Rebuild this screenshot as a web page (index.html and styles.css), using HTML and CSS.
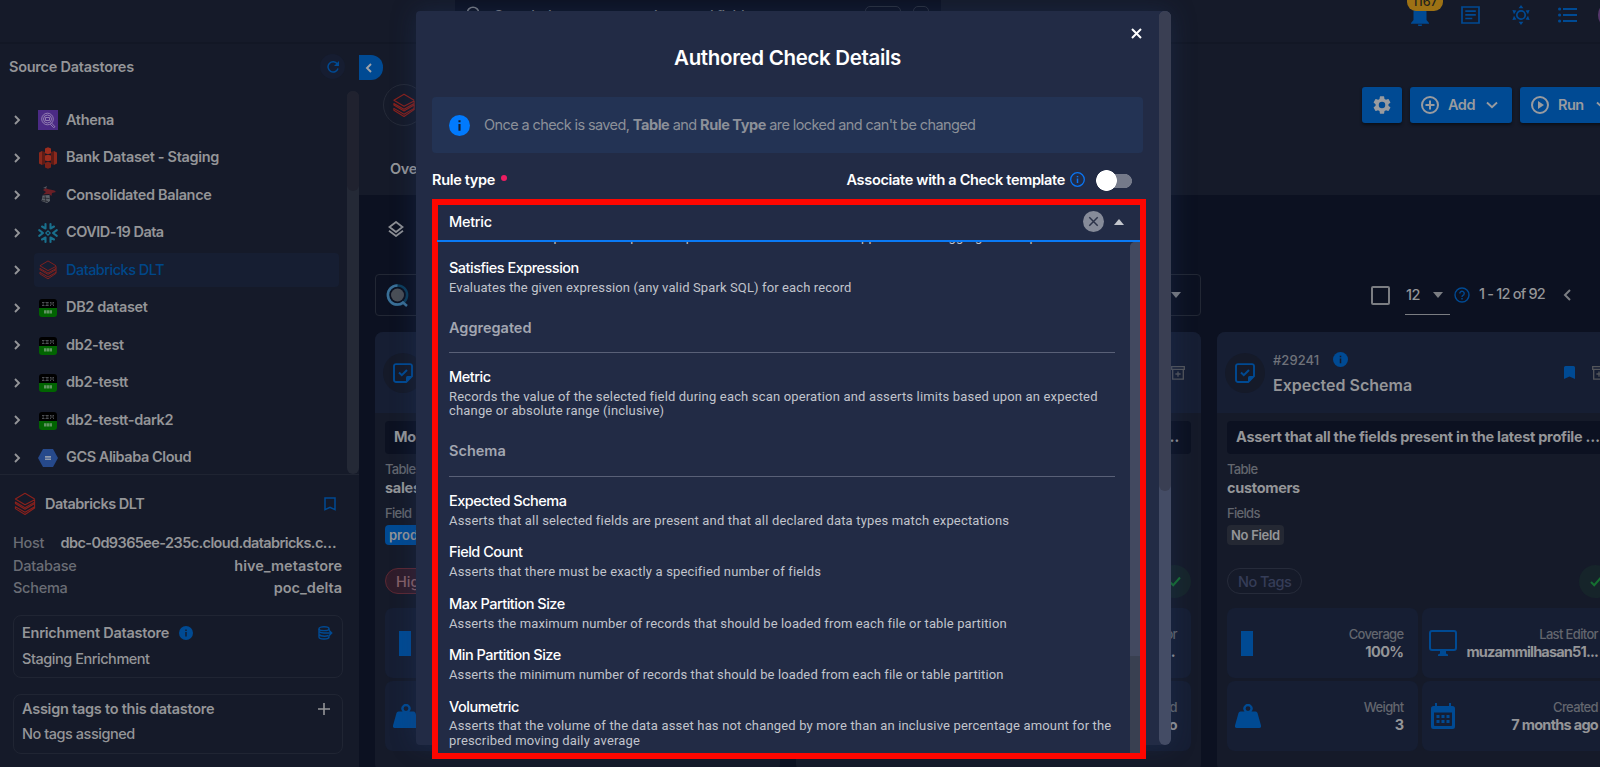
FILE: index.html
```
<!DOCTYPE html>
<html lang="en">
<head>
<meta charset="utf-8">
<title>Authored Check Details</title>
<link rel="stylesheet" href="styles.css">
</head>
<body>
<svg class="defs" width="0" height="0">
  <symbol id="chev" viewBox="0 0 8 10"><path d="M2 1l4 4-4 4" fill="none" stroke="currentColor" stroke-width="1.9"/></symbol>
  <symbol id="brick" viewBox="0 0 24 26"><g fill="none" stroke="currentColor" stroke-width="1.150" stroke-linejoin="round"><path d="M22.500 7.500L12 1.200 1.500 7.500 12 13.800l10.500-5.500v4.200L12 18.700 1.500 12.500v-1.600L12 17l10.500-6"/><path d="M22.500 12.500v4.800L12 24.500 1.500 18v-2L12 22l10.500-6"/></g></symbol>
  <symbol id="db2" viewBox="0 0 18 18"><path d="M0 3a3 3 0 013-3h12a3 3 0 013 3v6H0z" fill="#000"/><path d="M0 9h18v6a3 3 0 01-3 3H3a3 3 0 01-3-3z" fill="#016401"/><g fill="none" stroke="#55585c" stroke-width=".9"><path d="M3 3.500h2.500M3.500 5h1.500M3 6.500h2.500M6.500 3.500h3.200M7 5h2.500M6.500 6.500h3.200M11 3.500h1.500M13.500 3.500H15M11 5h4M11 6.500h1M14 6.500h1"/></g><path d="M5 11.300h2.600v3.200H5zM8 11.300h2.200v3.200H8zM10.600 11.300h2.400v3.200h-2.400z" fill="#629463"/></symbol>
  <symbol id="info" viewBox="0 0 20 20"><circle cx="10" cy="10" r="10" fill="currentColor"/><path d="M9 8.500h2V15H9zM9 5h2v2H9z" class="cut"/></symbol>
  <symbol id="note" viewBox="0 0 20 20"><path d="M3 1.100h14a2 2 0 012 2v10L13.200 19H3a2 2 0 01-2-2V3.100a2 2 0 012-2z" fill="none" stroke="currentColor" stroke-width="1.900"/><path d="M13 19v-4.500a1.500 1.500 0 011.500-1.500H19z" fill="currentColor"/><path d="M6 9.500l2.800 2.700L14 7" fill="none" stroke="currentColor" stroke-width="2"/></symbol>
  <symbol id="weight" viewBox="0 0 26 24"><path d="M5.500 7.500h4A4.600 4.600 0 1116.500 7.500h4a2 2 0 012 1.500L26 21.500A1.800 1.800 0 0124.200 24H1.800A1.800 1.800 0 010 21.500L3.500 9a2 2 0 012-1.500zM13 2.200a2.400 2.400 0 100 4.800 2.400 2.400 0 000-4.800z" fill="currentColor" fill-rule="evenodd"/></symbol>
  <symbol id="archive" viewBox="0 0 14 14"><path d="M.7 .7h12.600v2.600H.7zM1.700 3.500v9.600h10.600V3.500M7 5.500v5.300M4.400 8h5.200" fill="none" stroke="currentColor" stroke-width="1.300"/></symbol>
  <symbol id="check" viewBox="0 0 12 11"><path d="M1 6l3.200 3.200L11 1.500" fill="none" stroke="currentColor" stroke-width="2"/></symbol>
  <symbol id="mark" viewBox="0 0 11 13"><path d="M0 1.500A1.500 1.500 0 011.500 0h8A1.500 1.500 0 0111 1.500V13L5.500 10.500 0 13z" fill="currentColor"/></symbol>
</svg>

<div class="app">
  <header class="topbar">
    <div class="search">
      <svg class="search-icon" width="14" height="14" viewBox="0 0 14 14"><circle cx="7" cy="7" r="5.800" fill="none" stroke="currentColor" stroke-width="1.600"/></svg>
      <span>Search datastores, containers and fields</span>
      <i class="key key-wide"></i><i class="key"></i>
    </div>
    <div class="tools">
      <div class="bell">
        <svg width="18" height="22" viewBox="0 0 18 22"><path d="M9 0C5 1 2.500 4 2.500 8v8L0 19v.8h18V19l-2.500-3V8C15.500 4 13 1 9 0zM7 20.500h4a2 2 0 01-4 0z" fill="currentColor"/></svg>
        <span class="count">1167</span>
      </div>
      <svg class="t-doc" width="19" height="18" viewBox="0 0 19 18"><path d="M1 1h17v16H1zM4.300 5.200h10.500M4.300 8.800h10.500M4.300 12.500h7" fill="none" stroke="currentColor" stroke-width="1.700"/></svg>
      <svg class="t-sun" width="18" height="20" viewBox="0 0 18 20"><circle cx="9" cy="10" r="4.200" fill="none" stroke="currentColor" stroke-width="1.700"/><path d="M9 0l2.400 3.200H6.600zM9 20l2.400-3.200H6.600zM.4 5l4 .5L2 9.200zM17.600 5l-4 .5L16 9.200zM.4 15l4-.5L2 10.800zM17.600 15l-4-.5L16 10.800z" fill="currentColor"/></svg>
      <svg class="t-list" width="19" height="16" viewBox="0 0 19 16"><path d="M5 2h14M5 8h14M5 14h14" stroke="currentColor" stroke-width="1.800"/><g fill="currentColor"><circle cx="1.600" cy="2" r="1.600"/><circle cx="1.600" cy="8" r="1.600"/><circle cx="1.600" cy="14" r="1.600"/></g></svg>
      <i class="avatar"></i>
    </div>
  </header>

  <div class="body">
    <aside class="side">
      <div class="side-head">
        <h2>Source Datastores</h2>
        <span class="refresh"><svg width="12" height="12" viewBox="0 0 12 12"><path d="M10.300 3A5.100 5.100 0 1011 7.500" fill="none" stroke="currentColor" stroke-width="1.500"/><path d="M12 0v5H7z" fill="currentColor"/></svg></span>
      </div>
      <div class="tree">
        <div class="rows">
          <div class="row"><svg class="chev"><use href="#chev"/></svg><div class="cell"><svg class="ico" viewBox="0 0 20 20"><path d="M0 0h20v20H0z" fill="#4b2a85"/><g fill="none" stroke="#9a86b8" stroke-width=".9"><circle cx="9.500" cy="9" r="5.800"/><circle cx="9.500" cy="9" r="4"/><path d="M7.500 10.500v-3h4v3zM13.500 13l3.500 3.800-1.500.7-3.300-3.300"/></g></svg><span>Athena</span></div></div>
          <div class="row"><svg class="chev"><use href="#chev"/></svg><div class="cell"><svg class="ico" viewBox="0 0 20 20"><path d="M1 4.500L4 3v14l-3-1.500zM19 4.500L16 3v14l3-1.500z" fill="#8a281c"/><path d="M4 3l3 1v12l-3 1zM16 3l-3 1v12l3 1z" fill="#5e1b15"/><path d="M7 .5L10-.8l3 1.300v4.800l-3 1-3-1z" fill="#9c2d1e"/><path d="M7 7.500l3-.8 3 .8v5l-3 .8-3-.8z" fill="#9c2d1e"/><path d="M7 14.700l3-1 3 1v4.800l-3 1.300-3-1.300z" fill="#7c2219"/></svg><span>Bank Dataset - Staging</span></div></div>
          <div class="row"><svg class="chev"><use href="#chev"/></svg><div class="cell"><svg class="ico" viewBox="0 0 20 20"><path d="M8 3L5 5l3 2-3 2.500 6-.5 2.500 2 .5-3 4-1-1.500-1.500L12 4.500 9.500 4z" fill="#6b1f26"/><path d="M5 3l4-2-1 2.500z" fill="#565a62"/><path d="M4.500 10.500l7-.5.5 6-3 2-5.500-2z" fill="#5d6269"/><path d="M4.500 13l7 .5M4 15.500l6 1M7 10.500l1 6.500" stroke="#23262f" stroke-width=".8"/></svg><span>Consolidated Balance</span></div></div>
          <div class="row"><svg class="chev"><use href="#chev"/></svg><div class="cell"><svg class="ico" viewBox="0 0 20 20"><g fill="none" stroke="#19708d" stroke-width="2.100" stroke-linecap="round" stroke-linejoin="round"><path d="M7.500 1v4.500L4 3.500M12.500 1v4.500L16 3.500M7.500 19v-4.500L4 16.500M12.500 19v-4.500l3.500 2M1.200 7.200L5 10l-3.800 2.800M18.800 7.200L15 10l3.800 2.800"/></g><path d="M10 7.800l2.200 2.200-2.200 2.200L7.800 10z" fill="none" stroke="#19708d" stroke-width="1.200"/></svg><span class="tight">COVID-19 Data</span></div></div>
          <div class="row active"><svg class="chev"><use href="#chev"/></svg><div class="cell"><svg class="ico red"><use href="#brick"/></svg><span class="tight">Databricks DLT</span></div></div>
          <div class="row"><svg class="chev"><use href="#chev"/></svg><div class="cell"><svg class="ico pad"><use href="#db2"/></svg><span>DB2 dataset</span></div></div>
          <div class="row"><svg class="chev"><use href="#chev"/></svg><div class="cell"><svg class="ico pad"><use href="#db2"/></svg><span>db2-test</span></div></div>
          <div class="row"><svg class="chev"><use href="#chev"/></svg><div class="cell"><svg class="ico pad"><use href="#db2"/></svg><span>db2-testt</span></div></div>
          <div class="row"><svg class="chev"><use href="#chev"/></svg><div class="cell"><svg class="ico pad"><use href="#db2"/></svg><span>db2-testt-dark2</span></div></div>
          <div class="row"><svg class="chev"><use href="#chev"/></svg><div class="cell"><svg class="ico" viewBox="0 0 20 20"><path d="M5 1h10l5 9-5 9H5l-5-9z" fill="#26498b"/><path d="M7 8h6v1.700H7zM7 10.400h6v1.700H7z" fill="#8d98ab"/></svg><span class="snug">GCS Alibaba Cloud</span></div></div>
        </div>
        <div class="track"><i></i></div>
      </div>

      <section class="detail">
        <div class="ds-head"><svg width="22" height="24" class="red"><use href="#brick"/></svg><h3>Databricks DLT</h3>
          <svg class="bm" width="12" height="14" viewBox="0 0 12 14"><path d="M1 1h10v11.700l-5-2.300-5 2.300z" fill="none" stroke="currentColor" stroke-width="1.500"/></svg></div>
        <dl class="facts">
          <div><dt>Host</dt><dd class="host">dbc-0d9365ee-235c.cloud.databricks.c…</dd></div>
          <div><dt>Database</dt><dd>hive_metastore</dd></div>
          <div><dt>Schema</dt><dd>poc_delta</dd></div>
        </dl>
        <div class="box box-a">
          <div class="box-h"><b>Enrichment Datastore</b><svg class="blue" width="14" height="14"><use href="#info"/></svg>
          <svg class="blue end" width="15" height="14" viewBox="0 0 15 14"><g fill="none" stroke="currentColor" stroke-width="1.400"><ellipse cx="6" cy="2.700" rx="5" ry="1.900"/><path d="M1 2.700v8.300c0 1 2 2 5 2s5-1 5-2v-.8M11 2.700v1M1 5.500c1 1.200 3 1.500 5 1.500h7.500M1 8.500c1 1.300 3 1.700 5.500 1.700 1.500 0 3-.3 4-.7M11 4.300L13.700 7 11 9.700"/></g></svg></div>
          <p>Staging Enrichment</p>
        </div>
        <div class="box box-b">
          <div class="box-h"><b>Assign tags to this datastore</b>
          <svg class="plus end" width="12" height="12" viewBox="0 0 12 12"><path d="M6 0v12M0 6h12" stroke="currentColor" stroke-width="1.600"/></svg></div>
          <p>No tags assigned</p>
        </div>
      </section>
    </aside>

    <main class="main">
      <div class="hero">
        <span class="collapse"><svg width="8" height="10" viewBox="0 0 8 10"><path d="M6 1L2 5l4 4" fill="none" stroke="currentColor" stroke-width="1.900"/></svg></span>
        <div class="hero-row">
          <span class="logo"><svg width="24" height="25" class="red"><use href="#brick"/></svg></span>
          <div class="actions">
            <span class="btn gear"><svg width="18" height="18" viewBox="2 2 20 20"><path fill="currentColor" d="M19.140 12.940c.04-.3.060-.61.060-.94s-.02-.64-.07-.94l2.030-1.580a.49.49 0 00.12-.61l-1.920-3.320a.49.49 0 00-.59-.22l-2.390.96a7 7 0 00-1.620-.94l-.36-2.540A.48.48 0 0013.920 2.400h-3.840a.48.48 0 00-.47.41l-.36 2.540c-.59.24-1.130.57-1.620.94l-2.390-.96a.49.49 0 00-.59.22L2.740 8.870a.48.48 0 00.12.61l2.030 1.580a7 7 0 000 1.880l-2.030 1.580a.49.49 0 00-.12.61l1.920 3.320c.12.22.37.29.59.22l2.390-.96c.5.38 1.030.7 1.620.94l.36 2.540c.05.24.24.41.47.41h3.840c.24 0 .44-.17.470-.41l.36-2.540a7 7 0 001.620-.94l2.390.96c.22.08.470 0 .59-.22l1.920-3.320a.48.48 0 00-.12-.61zM12 15.600a3.600 3.600 0 110-7.200 3.600 3.600 0 010 7.200z"/></svg></span>
            <span class="btn"><svg width="18" height="18" viewBox="0 0 18 18"><g fill="none" stroke="currentColor" stroke-width="2"><circle cx="9" cy="9" r="8"/><path d="M9 4.500v9M4.500 9h9"/></g></svg><b>Add</b><svg class="caret" width="12" height="8" viewBox="0 0 12 8"><path d="M1 1.500l5 4.700 5-4.700" fill="none" stroke="currentColor" stroke-width="1.900"/></svg></span>
            <span class="btn"><svg width="18" height="18" viewBox="0 0 18 18"><circle cx="9" cy="9" r="8" fill="none" stroke="currentColor" stroke-width="2"/><path d="M7 5l6 4-6 4z" fill="currentColor"/></svg><b>Run</b><svg class="caret" width="12" height="8" viewBox="0 0 12 8"><path d="M1 1.500l5 4.700 5-4.700" fill="none" stroke="currentColor" stroke-width="1.900"/></svg></span>
          </div>
        </div>
        <div class="tabs">Ove</div>
      </div>
      <div class="layers"><svg width="16" height="16" viewBox="0 0 16 16"><path d="M8 1L14.500 6 8 11 1.500 6zM1 9.800l7 5.200 7-5.200" fill="none" stroke="currentColor" stroke-width="1.800"/></svg></div>
      <div class="filters">
        <div class="query"><svg width="24" height="25" viewBox="0 0 24 25"><circle cx="11.500" cy="12" r="6.500" fill="#4a4f57"/><circle cx="11.500" cy="12" r="9.600" fill="none" stroke="#0c3d5c" stroke-width="2.500"/><path d="M11.500 2.400a9.600 9.600 0 000 19.200M11 21.500c3 .2 5-1 6-2l4 3.500" fill="none" stroke="#3b6f96" stroke-width="2.500"/></svg><i class="tri"></i></div>
        <div class="pager"><i class="cb"></i><span class="per">12<i class="tri"></i></span>
          <svg class="blue" width="16" height="16" viewBox="0 0 16 16"><circle cx="8" cy="8" r="7" fill="none" stroke="currentColor" stroke-width="1.400"/><path d="M5.800 6.500a2.200 2.200 0 114 1.200C9 8.500 8 8.700 8 10M8 11v1.500" fill="none" stroke="currentColor" stroke-width="1.400"/></svg>
          <span class="range">1 - 12 of 92</span><svg class="prev" width="8" height="12" viewBox="0 0 8 12"><path d="M7 1L2 6l5 5" fill="none" stroke="currentColor" stroke-width="2"/></svg></div>
      </div>
      <div class="cards">
        <article class="card">
          <div class="c-head"><span class="disc"><svg width="20" height="20"><use href="#note"/></svg></span></div>
          <div class="c-body"><div class="msg">Mo…</div>
            <label>Table</label><strong>sales</strong><label class="l2">Field</label><span class="chip chip-blue">prod</span>
            <div class="tags"><span class="pill pill-red">High</span></div>
            <div class="stats"><div class="stat"><i class="bar"></i></div><div class="stat"></div><div class="stat"><svg class="blue w" width="26" height="24"><use href="#weight"/></svg></div><div class="stat"></div></div>
          </div>
        </article>
        <article class="card">
          <div class="c-head"><svg class="arch" width="14" height="14"><use href="#archive"/></svg></div>
          <div class="c-body"><div class="msg msg-end">…</div>
            <label>&nbsp;</label><strong>&nbsp;</strong><label class="l2">&nbsp;</label><span class="chip">&nbsp;</span>
            <div class="tags end"><span class="ok"><svg width="12" height="11"><use href="#check"/></svg></span></div>
            <div class="stats"><div class="stat"></div><div class="stat"><div class="val"><small>Last Editor</small><b class="dots">...</b></div></div><div class="stat"></div><div class="stat"><div class="val"><small>Created</small><b>ago</b></div></div></div>
          </div>
        </article>
        <article class="card">
          <div class="c-head"><span class="disc"><svg width="20" height="20"><use href="#note"/></svg></span>
            <div class="c-title"><div class="num">#29241 <svg class="blue" width="15" height="15"><use href="#info"/></svg></div><h4>Expected Schema</h4></div>
            <svg class="blue fav" width="11" height="13"><use href="#mark"/></svg><svg class="arch" width="14" height="14"><use href="#archive"/></svg></div>
          <div class="c-body"><div class="msg">Assert that all the fields present in the latest profile …</div>
            <label>Table</label><strong>customers</strong><label class="l2">Fields</label><span class="chip">No Field</span>
            <div class="tags"><span class="pill">No Tags</span><span class="ok"><svg width="12" height="11"><use href="#check"/></svg></span></div>
            <div class="stats">
              <div class="stat"><i class="bar"></i><div class="val"><small>Coverage</small><b>100%</b></div></div>
              <div class="stat"><svg class="blue s2" width="28" height="26" viewBox="0 0 28 26"><path d="M3 1h22a2 2 0 012 2v15a2 2 0 01-2 2H3a2 2 0 01-2-2V3a2 2 0 012-2z" fill="none" stroke="currentColor" stroke-width="2"/><path d="M11 20h6v3.500l2 1V26H9v-1.500l2-1z" fill="currentColor"/></svg><div class="val"><small>Last Editor</small><b class="user">muzammilhasan51...</b></div></div>
              <div class="stat"><svg class="blue w" width="26" height="24"><use href="#weight"/></svg><div class="val"><small>Weight</small><b>3</b></div></div>
              <div class="stat"><svg class="blue s4" width="24" height="26" viewBox="0 0 24 26"><path fill="currentColor" fill-rule="evenodd" d="M4 0h2v3h12V0h2v3h1.500A2.500 2.500 0 0124 5.500v18a2.500 2.500 0 01-2.500 2.500h-19A2.500 2.500 0 010 23.500v-18A2.500 2.500 0 012.500 3H4zM3 9.500v12.700c0 .5.300.8.800.8h16.400c.5 0 .8-.3.800-.8V9.500z"/><path fill="currentColor" d="M5.500 12h3v3h-3zM10.500 12h3v3h-3zM15.500 12h3v3h-3zM5.500 17h3v3h-3zM10.500 17h3v3h-3zM15.500 17h3v3h-3z"/></svg><div class="val"><small>Created</small><b class="ago">7 months ago</b></div></div>
            </div>
          </div>
        </article>
      </div>
    </main>
  </div>
</div>

<div class="modal">
  <div class="m-main">
    <svg class="close" width="11" height="11" viewBox="0 0 11 11"><path d="M1 1l9 9M10 1l-9 9" stroke="#fff" stroke-width="2"/></svg>
    <h1>Authored Check Details</h1>
    <div class="alert"><svg width="21" height="21"><use href="#info"/></svg><p>Once a check is saved, <b>Table</b> and <b>Rule Type</b> are locked and can't be changed</p></div>
    <div class="field-head"><b>Rule type</b><i class="dot"></i>
      <div class="assoc"><b>Associate with a Check template</b><svg width="15" height="15" viewBox="0 0 15 15"><circle cx="7.500" cy="7.500" r="6.800" fill="none" stroke="currentColor" stroke-width="1.300"/><path d="M7.500 6.500V11M7.500 4v1.300" stroke="currentColor" stroke-width="1.500"/></svg><i class="toggle"></i></div></div>
  </div>
  <div class="m-track"><i></i></div>
</div>

<div class="picker">
  <div class="input"><span>Metric</span><svg width="21" height="21" viewBox="0 0 21 21"><circle cx="10.500" cy="10.500" r="10.500" fill="#868b99"/><path d="M6.300 6.300l8.400 8.400M14.700 6.300l-8.400 8.400" stroke="#2c3349" stroke-width="1.500"/></svg><i class="up"></i></div>
  <div class="menu">
    <div class="list">
      <div class="cut-line"><p>Verifies that the specified comparison operator evaluates true when applied to two aggregation expressions</p></div>
      <div class="opt"><h5>Satisfies Expression</h5><p class="fit">Evaluates the given expression (any valid Spark SQL) for each record</p></div>
      <div class="group">Aggregated</div>
      <div class="opt"><h5>Metric</h5><p>Records the value of the selected field during each scan operation and asserts limits based upon an expected<br>change or absolute range (inclusive)</p></div>
      <div class="group">Schema</div>
      <div class="opt"><h5>Expected Schema</h5><p>Asserts that all selected fields are present and that all declared data types match expectations</p></div>
      <div class="opt"><h5>Field Count</h5><p>Asserts that there must be exactly a specified number of fields</p></div>
      <div class="opt"><h5>Max Partition Size</h5><p class="fit">Asserts the maximum number of records that should be loaded from each file or table partition</p></div>
      <div class="opt"><h5>Min Partition Size</h5><p class="fit">Asserts the minimum number of records that should be loaded from each file or table partition</p></div>
      <div class="opt"><h5>Volumetric</h5><p>Asserts that the volume of the data asset has not changed by more than an inclusive percentage amount for the<br>prescribed moving daily average</p></div>
    </div>
    <div class="p-track"><i></i></div>
  </div>
</div>
</body>
</html>
```
FILE: styles.css
```
* { box-sizing: border-box; margin: 0; padding: 0; }
html, body { width: 1600px; height: 767px; overflow: hidden; }
body { position: relative; background: #0c1121; color: #949598; font: 600 14.5px/20px Inter, "Liberation Sans", sans-serif; letter-spacing: -.3px; }
svg { display: block; flex: none; }
i { display: block; flex: none; }
.defs { position: absolute; }
.blue { color: #004a93; }
.red { color: #8c211c; }
.cut { fill: #151b2b; }
.end { margin-left: auto; }

/* top bar */
.app { width: 1600px; height: 767px; overflow: hidden; display: flex; flex-direction: column; }
.topbar { height: 44px; flex: none; background: #151a29; border-bottom: 2px solid #121725; display: flex; padding-left: 455px; overflow: hidden; }
.search { width: 486px; flex: none; height: 42px; background: #0c1121; display: flex; padding: 6px 12px 0 11px; color: #777a80; font-weight: 500; letter-spacing: -.55px; }
.search-icon { margin-right: 14px; }
.search span { line-height: 17px; margin-top: 1px; }
.key { width: 16px; height: 18px; border: 1px solid #2a2f3c; border-radius: 5px; margin-left: 12px; }
.key-wide { width: 36px; margin-left: auto; }
.tools { flex: none; display: flex; color: #004a93; padding-left: 470px; }
.bell { position: relative; width: 18px; padding-top: 4px; }
.count { position: absolute; left: -4px; top: -8px; width: 36px; height: 19px; border-radius: 9px; background: #9d7114; color: #22221c; font-size: 12.5px; font-weight: 500; text-align: center; line-height: 20px; letter-spacing: 0; }
.t-doc { margin: 6px 0 0 32px; }
.t-sun { margin: 5px 0 0 32px; }
.t-list { margin: 7px 0 0 28px; }
.avatar { width: 28px; height: 28px; border-radius: 50%; background: #55366b; margin: 1px 0 0 21px; }

/* sidebar */
.body { flex: 1; display: flex; min-height: 0; }
.side { width: 359px; flex: none; background: #151a29; }
.side-head { height: 47px; padding: 9px 14px 0 9px; display: flex; justify-content: space-between; }
.side-head h2 { font-size: 14.5px; font-weight: 600; line-height: 27px; letter-spacing: -.26px; }
.refresh { width: 25px; height: 25px; border-radius: 50%; background: #161d31; color: #004a93; display: grid; place-items: center; margin-top: 1px; }
.tree { height: 384px; display: flex; border-bottom: 1px solid #1f2432; }
.rows { flex: 1; padding-top: 10px; }
.row { height: 37.5px; display: flex; align-items: center; padding: 0 8px 0 13px; }
.chev { width: 8px; height: 10px; margin-right: 13px; margin-top: 1px; }
.cell { flex: 1; height: 34px; display: flex; align-items: center; border-radius: 4px; padding-left: 4px; gap: 8px; letter-spacing: -.34px; }
.ico { width: 20px; height: 20px; margin-top: 1px; overflow: visible; }
.pad { padding: 1px; margin-top: 2px; }
.cell .tight { letter-spacing: -.52px; }
.cell .snug { letter-spacing: -.45px; }
.active .cell { background: #161e32; color: #004789; font-weight: 500; }
.track { width: 12px; background: #242936; border-radius: 6px; }
.track i { height: 100px; background: #20222f; border-radius: 6px; }
.detail { padding: 17px 16px 0 13px; }
.ds-head { display: flex; align-items: center; height: 23px; padding: 0 7px 0 1px; color: #949598; }
.ds-head h3 { font-size: 14.5px; font-weight: 600; margin-left: 9px; letter-spacing: -.5px; }
.bm { color: #004a93; margin-left: auto; }
.facts { margin-top: 17px; display: grid; grid-template-rows: 23px 22px 22px; }
.facts div { display: flex; justify-content: space-between; height: 22px; line-height: 22px; }
.facts div:first-child { padding-right: 6px; }
.facts dt { font-weight: 500; color: #6a6d75; letter-spacing: -.25px; }
.facts dd { letter-spacing: 0; margin-right: 1px; }
.facts .host { letter-spacing: -.6px; }
.detail .box { width: 330px; border: 1px solid #202533; border-radius: 8px; padding: 7px 9px 0 8px; }
.detail .box-a { height: 63px; margin-top: 16px; }
.detail .box-b { height: 60px; margin-top: 16px; padding-top: 4px; }
.box-h { display: flex; align-items: center; height: 20px; letter-spacing: -.25px; }
.box-h b { font-weight: 600; }
.box-h .blue { margin-left: 10px; }
.box-h .end { margin-left: auto; }
.plus.end { margin-right: 3px; }
.box p { font-weight: 500; margin-top: 6px; letter-spacing: -.46px; }
.box-b p { margin-top: 5px; }

/* main */
.main { flex: 1; min-width: 0; display: flex; flex-direction: column; }
.hero { height: 151px; flex: none; background: #151a29; position: relative; }
.collapse { position: absolute; left: 0; top: 11px; width: 24px; height: 25px; background: #004a93; border-radius: 0 12px 12px 0; display: grid; place-items: center; padding-right: 4px; color: #a0a3a8; }
.hero-row { display: flex; justify-content: space-between; padding: 40px 0 0 24px; }
.logo { width: 42px; height: 42px; border-radius: 50%; border: 1px solid #252a38; display: grid; place-items: center; flex: none; }
.actions { display: flex; gap: 8px; padding-top: 3px; width: 238px; letter-spacing: -.5px; }
.btn { height: 36px; flex: none; border-radius: 3px; background: #004a93; color: #999b9f; display: flex; align-items: center; width: 102px; padding-left: 11px; box-shadow: 0 2px 3px #0c1018; }
.btn.gear { width: 40px; }
.btn b { font-weight: 600; margin-left: 9px; width: 26px; }
.btn .caret { margin-left: 12px; }
.tabs { margin: 33px 0 0 31px; }
.layers { padding: 26px 0 0 29px; color: #8d8f94; height: 79px; flex: none; }
.filters { display: flex; height: 42px; flex: none; padding-left: 16px; }
.query { width: 826px; height: 42px; border: 1px solid #222734; border-radius: 4px; display: flex; align-items: center; justify-content: space-between; padding: 0 19px 0 10px; }
.tri { width: 0; height: 0; border: 5.5px solid transparent; border-top: 6px solid #7b7d82; border-bottom: 0; }
.pager { display: flex; align-items: center; margin-left: 170px; font-weight: 500; letter-spacing: -.6px; }
.cb { width: 19px; height: 19px; border: 2px solid #7b7d82; border-radius: 2px; margin-right: 15px; }
.per { width: 45px; height: 40px; border-bottom: 1px solid #7b7d82; display: flex; align-items: center; justify-content: space-between; padding: 1px 7px 0 1px; margin-right: 4px; }
.range { margin-left: 9px; width: 67px; white-space: nowrap; letter-spacing: -.8px; margin-top: -2px; }
.prev { margin-left: 17px; color: #7b7d82; }

/* cards */
.cards { display: flex; gap: 16px; padding: 16px 0 0 16px; }
.card { width: 405px; height: 440px; flex: none; background: #151a29; border-radius: 8px; }
.c-head { height: 81px; background: #161e33; border-radius: 8px 8px 0 0; display: flex; align-items: center; padding: 0 16px 0 8px; }
.disc { width: 40px; height: 40px; border-radius: 50%; background: #151a29; color: #004a93; display: grid; place-items: center; }
.c-title { margin-left: 8px; }
.num { display: flex; align-items: center; gap: 14px; font-weight: 500; font-size: 13px; color: #6f727a; letter-spacing: .05px; height: 24px; }
.c-title h4 { font-size: 16px; font-weight: 600; height: 26px; line-height: 26px; letter-spacing: 0; }
.fav { margin-left: auto; margin-right: 17px; }
.arch { color: #54565b; }
.c-head > .arch:first-child { margin-left: auto; }
.c-body { padding: 8px 10px 0; display: flex; flex-direction: column; align-items: flex-start; }
.msg { width: 385px; height: 33px; line-height: 32px; background: #0c1121; border-radius: 4px; padding: 0 9px; font-weight: 700; letter-spacing: -.26px; white-space: nowrap; }
.msg-end { text-align: right; padding-right: 12px; }
.c-body label { font-size: 13px; font-weight: 500; color: #63666e; letter-spacing: -.7px; line-height: 18px; margin-top: 6px; }
.c-body strong { font-weight: 700; letter-spacing: -.3px; line-height: 20px; }
.c-body .l2 { margin-top: 6px; }
.chip { height: 20px; line-height: 20px; font-size: 13px; font-weight: 600; padding: 0 4px; border-radius: 4px; background: #242833; letter-spacing: -.3px; margin-top: 3px; min-width: 10px; }
.chip-blue { background: #004a93; letter-spacing: 0; }
.tags { height: 34px; width: 385px; display: flex; align-items: center; justify-content: space-between; margin: 19px 0 10px; }
.tags.end { justify-content: flex-end; margin-left: 0; }
.pill { height: 26px; line-height: 25px; border: 1px solid #262b3a; border-radius: 13px; padding: 0 10px; font-weight: 500; color: #353d58; letter-spacing: -.55px; }
.pill-red { background: #301c2a; border-color: #5c2833; color: #866068; letter-spacing: 0; }
.ok { width: 33px; height: 33px; border-radius: 50%; background: #16242a; color: #167031; display: grid; place-items: center; }
.stats { display: grid; grid-template-columns: 190.5px 190.5px; gap: 3.5px 4px; grid-auto-rows: 69.5px; }
.stat { background: #161e33; border-radius: 8px; padding: 0 14px; display: flex; align-items: center; }
.bar { width: 12px; height: 25px; background: #004a93; margin-top: 1px; }
.stat .w { margin-left: -6px; }
.stat .s2 { margin-left: -7px; }
.stat .s4 { margin-left: -5px; }
.val { margin-left: auto; text-align: right; }
.val small { display: block; font-size: 13px; font-weight: 500; color: #63666e; letter-spacing: -.65px; line-height: 18px; }
.val b { display: block; font-weight: 700; letter-spacing: -.6px; line-height: 18px; }
.val .user { letter-spacing: -.82px; }
.val .ago { letter-spacing: -.72px; }
.val .dots { padding-right: 2px; }

/* dialog */
.modal { position: absolute; left: 416px; top: 11px; width: 755px; height: 734px; background: #222b45; border-radius: 4px 6px 6px 4px; box-shadow: 0 0 24px rgba(34, 60, 110, .35); display: flex; color: #fff; }
.m-main { flex: 1; padding: 17px 16px 0; display: flex; flex-direction: column; }
.close { align-self: flex-end; margin: 0 1px 1px 0; }
h1 { font-size: 20.5px; font-weight: 600; letter-spacing: -.33px; line-height: 28px; text-align: center; margin-top: 4px; }
.alert { margin-top: 25px; height: 56px; flex: none; background: #233354; border-radius: 4px; display: flex; align-items: center; padding-left: 17px; gap: 14px; color: #017afd; }
.alert .cut { fill: #233354; }
.alert p { font-weight: 400; color: #8c9099; letter-spacing: -.6px; }
.alert b { font-weight: 700; letter-spacing: -.45px; }
.field-head { display: flex; align-items: center; margin-top: 16px; height: 22px; letter-spacing: -.32px; }
.field-head b { font-weight: 600; }
.dot { width: 6px; height: 6px; border-radius: 50%; background: #ee1d62; margin: -5px 0 0 6px; }
.assoc { margin-left: auto; display: flex; align-items: center; color: #fff; padding-right: 11px; letter-spacing: -.32px; }
.assoc svg { margin: -2px 11px 0 5px; color: #0a75f3; }
.toggle { width: 36px; height: 21px; background: radial-gradient(circle at 10.5px 10.5px, #fff 10px, transparent 10.7px), linear-gradient(#757a8a, #757a8a) 14px 4px / 15px 14px no-repeat, radial-gradient(circle at 29px 11px, #757a8a 6.7px, transparent 7.2px); }
.m-track { width: 12px; background: #444c65; border-radius: 6px; }
.m-track i { height: 480px; background: #3a3f53; border-radius: 6px; }

.picker { position: absolute; left: 432px; top: 199px; width: 714px; height: 560px; border: 6px solid #fe0600; background: #222b45; color: #fff; display: flex; flex-direction: column; }
.input { height: 37px; flex: none; border-bottom: 2px solid #0a7af5; display: flex; align-items: center; padding: 0 16px 2px 12px; font-weight: 500; margin-left: -1px; }
.input svg { margin-left: auto; }
.up { width: 0; height: 0; border: 5.5px solid transparent; border-top: 0; border-bottom: 6px solid #c3c6cd; margin-left: 10px; }
.menu { flex: 1; min-height: 0; display: flex; overflow: hidden; }
.list { flex: 1; padding: 0 15px 0 11px; }
.cut-line { height: 10px; overflow: hidden; display: flex; align-items: flex-start; }
.cut-line p, .opt p { font: 400 13px/14.3px Roboto, sans-serif; color: #c1c4cc; letter-spacing: .17px; white-space: nowrap; }
.cut-line p { margin-top: -12px; }
.opt .fit { letter-spacing: .12px; }
.opt { padding: 6px 0 8.5px; }
.opt h5 { font-size: 14.5px; font-weight: 500; line-height: 20px; letter-spacing: -.5px; margin-bottom: 2.7px; }
.group { height: 57.8px; padding-top: 14.3px; color: #a2a6b1; font-weight: 600; letter-spacing: 0; background: linear-gradient(#596077, #596077) 0 48.5px / 100% 1px no-repeat; }
.p-track { width: 10px; background: #394051; border-radius: 5px 0 0 0; }
.p-track i { height: 414px; background: #424960; border-radius: 5px 0 0 0; }
```
